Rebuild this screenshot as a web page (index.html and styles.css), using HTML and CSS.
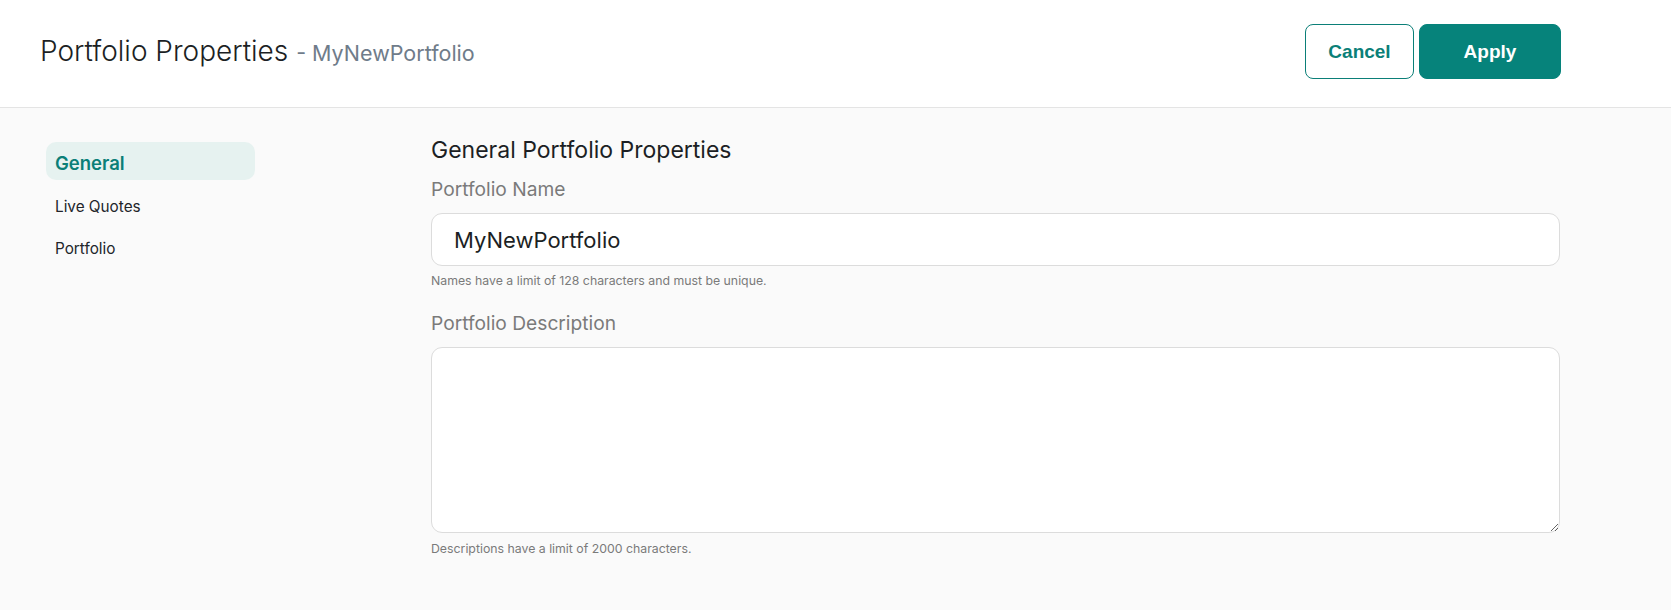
FILE: index.html
```html
<!DOCTYPE html>
<html lang="en">
<head>
<meta charset="utf-8">
<title>Portfolio Properties</title>
<link rel="stylesheet" href="styles.css">
</head>
<body>
<header class="topbar">
  <h1 class="title">Portfolio Properties <span class="subtitle">- MyNewPortfolio</span></h1>
  <div class="actions">
    <button class="btn btn-outline" type="button">Cancel</button>
    <button class="btn btn-primary" type="button">Apply</button>
  </div>
</header>
<div class="layout">
  <nav class="sidenav">
    <a class="nav-item active">General</a>
    <a class="nav-item">Live Quotes</a>
    <a class="nav-item">Portfolio</a>
  </nav>
  <main class="content">
    <h2 class="section-title">General Portfolio Properties</h2>
    <div class="field">
      <label class="field-label" for="pname">Portfolio Name</label>
      <input class="text-input" id="pname" type="text" value="MyNewPortfolio">
      <p class="hint">Names have a limit of 128 characters and must be unique.</p>
    </div>
    <div class="field">
      <label class="field-label" for="pdesc">Portfolio Description</label>
      <textarea class="text-area" id="pdesc"></textarea>
      <p class="hint">Descriptions have a limit of 2000 characters.</p>
    </div>
  </main>
</div>
</body>
</html>
```
FILE: styles.css
```css
* { box-sizing: border-box; }
html, body {
  margin: 0;
  padding: 0;
  background: #fafafa;
  font-family: Inter, "Noto Sans", "Liberation Sans", sans-serif;
  color: #1f2328;
}
.topbar {
  height: 108px;
  background: #ffffff;
  border-bottom: 1px solid #e4e4e4;
  display: flex;
  align-items: center;
  justify-content: space-between;
  padding: 0 110px 4px 40px;
}
.title {
  margin: 0;
  font-size: 28px;
  font-weight: 300;
  color: #1c1f24;
  line-height: 34px;
}
.subtitle {
  font-size: 21.5px;
  color: #6f7c8a;
  font-weight: 400;
}
.actions {
  display: flex;
  gap: 5px;
}
.btn {
  height: 55px;
  border-radius: 8px;
  font-family: "Liberation Sans", Arial, sans-serif;
  font-weight: 700;
  font-size: 19px;
  cursor: pointer;
}
.btn-outline {
  width: 109px;
  background: #ffffff;
  color: #0b7f78;
  border: 1px solid #0b7f78;
}
.btn-primary {
  width: 142px;
  background: #06837b;
  color: #ffffff;
  border: 1px solid #06837b;
}
.layout {
  display: grid;
  grid-template-columns: 385px 1fr;
  padding: 28px 111px 40px 46px;
}
.sidenav {
  display: flex;
  flex-direction: column;
  gap: 4px;
  margin-top: 6px;
}
.nav-item {
  display: block;
  width: 209px;
  height: 38px;
  padding: 13px 9px 5px;
  font-size: 15.3px;
  line-height: 20px;
  color: #22252a;
  border-radius: 10px;
}
.nav-item.active {
  background: #e6f2f0;
  color: #0b7f78;
  font-size: 18.5px;
  font-weight: 600;
  padding: 10.5px 9px 7.5px;
}
.content {
  display: flex;
  flex-direction: column;
}
.section-title {
  margin: 0;
  font-size: 23px;
  line-height: 28px;
  font-weight: 400;
  color: #1c1f24;
}
.field {
  display: flex;
  flex-direction: column;
}
.field-label {
  margin-top: 13px;
  font-size: 19.2px;
  line-height: 24px;
  color: #7a7a7a;
}
.field + .field .field-label {
  margin-top: 21.5px;
}
.text-input {
  margin-top: 12px;
  height: 53px;
  border: 1px solid #dcdcdc;
  border-radius: 11px;
  background: #ffffff;
  padding: 0 22px;
  font-family: Inter, "Noto Sans", sans-serif;
  font-size: 22px;
  color: #1c1f24;
  outline: none;
}
.text-area {
  margin-top: 12px;
  height: 186px;
  border: 1px solid #dcdcdc;
  border-radius: 11px;
  background: #ffffff;
  padding: 12px 22px;
  font-family: Inter, "Noto Sans", sans-serif;
  font-size: 18px;
  resize: vertical;
  outline: none;
}
.hint {
  margin: 7px 0 0;
  font-size: 12.3px;
  line-height: 16px;
  color: #7a7a7a;
}
.field + .field .hint {
  margin-top: 8px;
}
```
